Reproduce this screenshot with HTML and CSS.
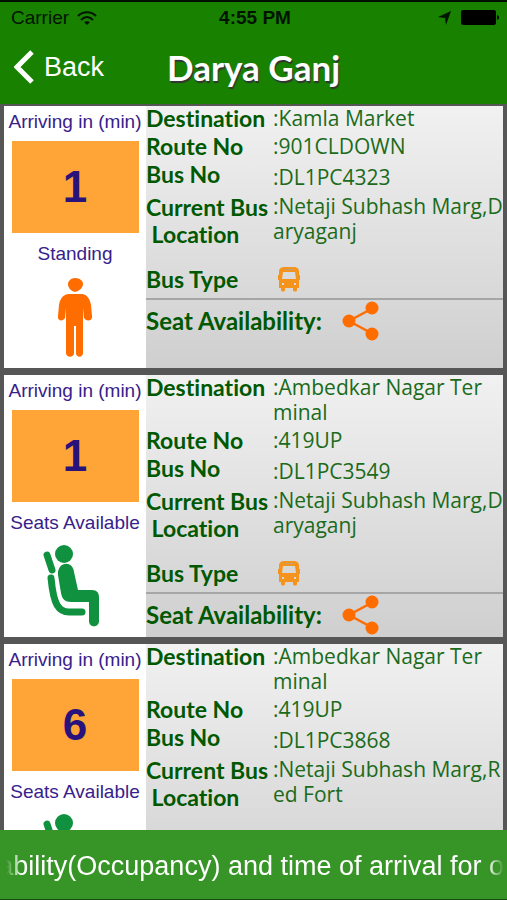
FILE: index.html
```html
<!DOCTYPE html>
<html lang="en">
<head>
<meta charset="utf-8">
<meta name="viewport" content="width=device-width, initial-scale=1">
<title>Darya Ganj</title>
<link rel="stylesheet" href="styles.css">
</head>
<body>
<svg class="defs" aria-hidden="true">
  <symbol id="standing" viewBox="0 0 36 80">
    <path d="M18 1c5 0 8 3 8 6 0 4-4 7-8 8-4-1-7-4-7-8 0-3 3-6 7-6z"/>
    <path d="M12 17h12c7 0 9 6 10 11l1 11c1 5-6 6-8 2l-1-10v45c0 5-7 5-7 0V49h-2v27c0 5-8 5-8 0V31L8 41c-2 4-8 3-7-2l1-11c1-6 4-11 10-11z"/>
  </symbol>
  <symbol id="seated" viewBox="0 0 58 84">
    <circle cx="22" cy="10" r="9"/>
    <path d="M5 11l5 15M9 34c1 10 2 20 6 27 3 5 7 7 12 7h13" fill="none" stroke="currentColor" stroke-width="7" stroke-linecap="round"/>
    <path d="M16 31c-1-14 15-15 16-3l4 18h14c5 0 7 3 7 7v24c0 7-10 7-10 0V58H29c-6 0-9-3-10-9z"/>
  </symbol>
  <symbol id="bus" viewBox="0 0 24 26">
    <path fill-rule="evenodd" d="M7 1h10c3 0 5 2 5 4v4h1v5h-1v8h-2v2c0 2-4 2-4 0v-2H8v2c0 2-4 2-4 0v-2H2v-8H1V9h1V5c0-2 2-4 5-4zM6 6L5 13h14L18 6zM5 17v2h2v-2zM17 17v2h2v-2z"/>
    <path d="M8 3.500h8" stroke="#b9a27c" stroke-width="1"/>
  </symbol>
  <symbol id="share" viewBox="0 0 38 40">
    <path d="M31 7L7 20l24 13" fill="none" stroke="currentColor" stroke-width="2.500"/>
    <circle cx="7" cy="20" r="6.500"/><circle cx="30" cy="7" r="6.500"/><circle cx="30" cy="33" r="6.500"/>
  </symbol>
</svg>

<header class="header">
  <div class="status">
    <div class="carrier">Carrier
      <svg width="20" height="15" viewBox="0 0 20 15" fill="none" stroke="#001400" stroke-width="2"><path class="arc" d="M1 5c5-5 13-5 18 0M4 9c4-4 8-4 12 0"/><path d="M7 11c2-1 4-1 6 0l-3 3z" fill="#001400" stroke="none"/></svg>
    </div>
    <div class="clock">4:55 PM</div>
    <div class="indicators">
      <svg width="14" height="14" viewBox="0 0 14 14"><path d="M13 0L8 14 7 7 0 6z" fill="#001400"/></svg>
      <svg width="38" height="16" viewBox="0 0 38 16"><rect width="35" height="15" rx="2"/><path d="M36 5c3 1 3 4 0 5z"/></svg>
    </div>
  </div>
  <nav class="navbar">
    <a class="back" href="#"><svg width="20" height="34" viewBox="0 0 20 34"><path d="M18 2L3 17l15 15" fill="none" stroke="#fff" stroke-width="5"/></svg>Back</a>
    <h1 class="title">Darya Ganj</h1>
  </nav>
</header>

<main class="list">
  <article class="card">
    <section class="arrival">
      <p class="caption">Arriving in (min)</p>
      <p class="minutes">1</p>
      <p class="caption">Standing</p>
      <svg class="person standing"><use href="#standing"/></svg>
    </section>
    <section class="details">
      <dl class="rows">
        <div class="row"><dt>Destination</dt><dd>:Kamla Market</dd></div>
        <div class="row"><dt>Route No</dt><dd>:901CLDOWN</dd></div>
        <div class="row busno"><dt>Bus No</dt><dd>:DL1PC4323</dd></div>
        <div class="row location"><dt>Current Bus<br>&nbsp;Location</dt><dd>:Netaji Subhash Marg,D<br>aryaganj</dd></div>
        <div class="row type"><dt>Bus Type</dt><dd><svg class="bus"><use href="#bus"/></svg></dd></div>
      </dl>
      <div class="seats">Seat Availability: <button class="share" aria-label="Share"><svg><use href="#share"/></svg></button></div>
    </section>
  </article>

  <article class="card">
    <section class="arrival">
      <p class="caption">Arriving in (min)</p>
      <p class="minutes">1</p>
      <p class="caption">Seats Available</p>
      <svg class="person seated"><use href="#seated"/></svg>
    </section>
    <section class="details">
      <dl class="rows">
        <div class="row"><dt>Destination</dt><dd>:Ambedkar Nagar Ter<br>minal</dd></div>
        <div class="row"><dt>Route No</dt><dd>:419UP</dd></div>
        <div class="row busno"><dt>Bus No</dt><dd>:DL1PC3549</dd></div>
        <div class="row location"><dt>Current Bus<br>&nbsp;Location</dt><dd>:Netaji Subhash Marg,D<br>aryaganj</dd></div>
        <div class="row type"><dt>Bus Type</dt><dd><svg class="bus"><use href="#bus"/></svg></dd></div>
      </dl>
      <div class="seats">Seat Availability: <button class="share" aria-label="Share"><svg><use href="#share"/></svg></button></div>
    </section>
  </article>

  <article class="card">
    <section class="arrival">
      <p class="caption">Arriving in (min)</p>
      <p class="minutes">6</p>
      <p class="caption">Seats Available</p>
      <svg class="person seated"><use href="#seated"/></svg>
    </section>
    <section class="details">
      <dl class="rows">
        <div class="row"><dt>Destination</dt><dd>:Ambedkar Nagar Ter<br>minal</dd></div>
        <div class="row"><dt>Route No</dt><dd>:419UP</dd></div>
        <div class="row busno"><dt>Bus No</dt><dd>:DL1PC3868</dd></div>
        <div class="row location"><dt>Current Bus<br>&nbsp;Location</dt><dd>:Netaji Subhash Marg,R<br>ed Fort</dd></div>
      </dl>
    </section>
  </article>
</main>

<footer class="ticker"><span>ability(Occupancy) and time of arrival for o</span></footer>
</body>
</html>
```

FILE: styles.css
```css
* { box-sizing: border-box; }

body {
  margin: 0;
  height: 100vh;
  display: flex;
  flex-direction: column;
  overflow: hidden;
  background: #565656;
  font-family: "Liberation Sans", Arial, sans-serif;
}

p, h1, dl, dd { margin: 0; }
svg { display: block; fill: currentColor; }
.arc { fill: none; }
.defs { position: absolute; width: 0; height: 0; }

.header {
  flex: none;
  background: #188200;
  border-top: 2px solid #001000;
  padding-bottom: 10px;
}

.status {
  display: grid;
  grid-template-columns: 1fr auto 1fr;
  align-items: center;
  height: 32px;
  padding: 0 8px 0 11px;
  color: #001400;
  font-size: 19px;
}
.carrier { display: flex; align-items: center; gap: 8px; }
.clock { font-weight: bold; }
.indicators { display: flex; align-items: center; justify-content: flex-end; gap: 9px; color: #000; }

.navbar {
  display: grid;
  grid-template-columns: 1fr auto 1fr;
  align-items: center;
  height: 62px;
  margin-bottom: -2px;
  padding: 4px 14px 0;
  color: #fff;
}
.back {
  display: flex;
  align-items: center;
  gap: 10px;
  color: #fff;
  font-size: 27px;
  text-decoration: none;
}
.title {
  font: bold 35px/40px Lato, sans-serif;
  text-shadow: 1px 2px 1px #333;
}

.list {
  flex: 1;
  min-height: 0;
  overflow: hidden;
  display: flex;
  flex-direction: column;
  gap: 7px;
  padding: 2px 4px 0;
}

.card {
  flex: none;
  display: grid;
  grid-template-columns: 142px 1fr;
  min-height: 262px;
  background: #fff;
}

.arrival {
  display: flex;
  flex-direction: column;
  align-items: center;
  color: #37218c;
}
.caption { font-size: 19px; line-height: 24px; padding: 4px 0 7px; white-space: nowrap; }
.minutes {
  width: 127px;
  margin-bottom: 5px;
  background: #ffa436;
  color: #28127c;
  font-size: 44px;
  font-weight: bold;
  line-height: 92px;
  text-align: center;
}
.standing { width: 36px; height: 80px; margin-top: 4px; color: #ff6c00; }
.seated { width: 58px; height: 84px; margin: 2px 8px 0 0; color: #0f913f; }

.details {
  background: linear-gradient(#f1f1f1, #cfcfcf);
  color: #005800;
  font: 21px/25px "Open Sans", sans-serif;
  white-space: nowrap;
}
.row {
  display: grid;
  grid-template-columns: 127px 1fr;
  padding-bottom: 3px;
}
dt, .seats {
  font-family: Lato, sans-serif;
  font-size: 23px;
  font-weight: bold;
  font-variant-ligatures: none;
}
dd { color: #1b6b1b; }
.busno { padding-bottom: 4px; }
.busno dd { padding-top: 3px; }
.location { padding-bottom: 18px; }
.location dt { line-height: 27px; }
.type { align-items: center; padding-bottom: 6px; }
.bus { width: 24px; height: 26px; margin-left: 4px; color: #f5941d; }

.seats {
  display: flex;
  align-items: center;
  gap: 20px;
  height: 43px;
  border-top: 2px solid #a6a6a6;
  font-size: 24px;
}
.share { border: 0; padding: 0; background: none; color: #ff6c00; }
.share svg { width: 38px; height: 40px; }

.ticker {
  flex: none;
  display: flex;
  align-items: center;
  justify-content: flex-end;
  height: 70px;
  overflow: hidden;
  background: #379426;
  border-bottom: 1px solid #1c4a14;
  color: #fff;
  font-size: 27px;
  white-space: nowrap;
  padding: 4px 3px 0 0;
}
.ticker span {
  -webkit-mask-image: linear-gradient(90deg, transparent 8px, #000 24px, #000 calc(100% - 16px), transparent);
  mask-image: linear-gradient(90deg, transparent 8px, #000 24px, #000 calc(100% - 16px), transparent);
}
```
